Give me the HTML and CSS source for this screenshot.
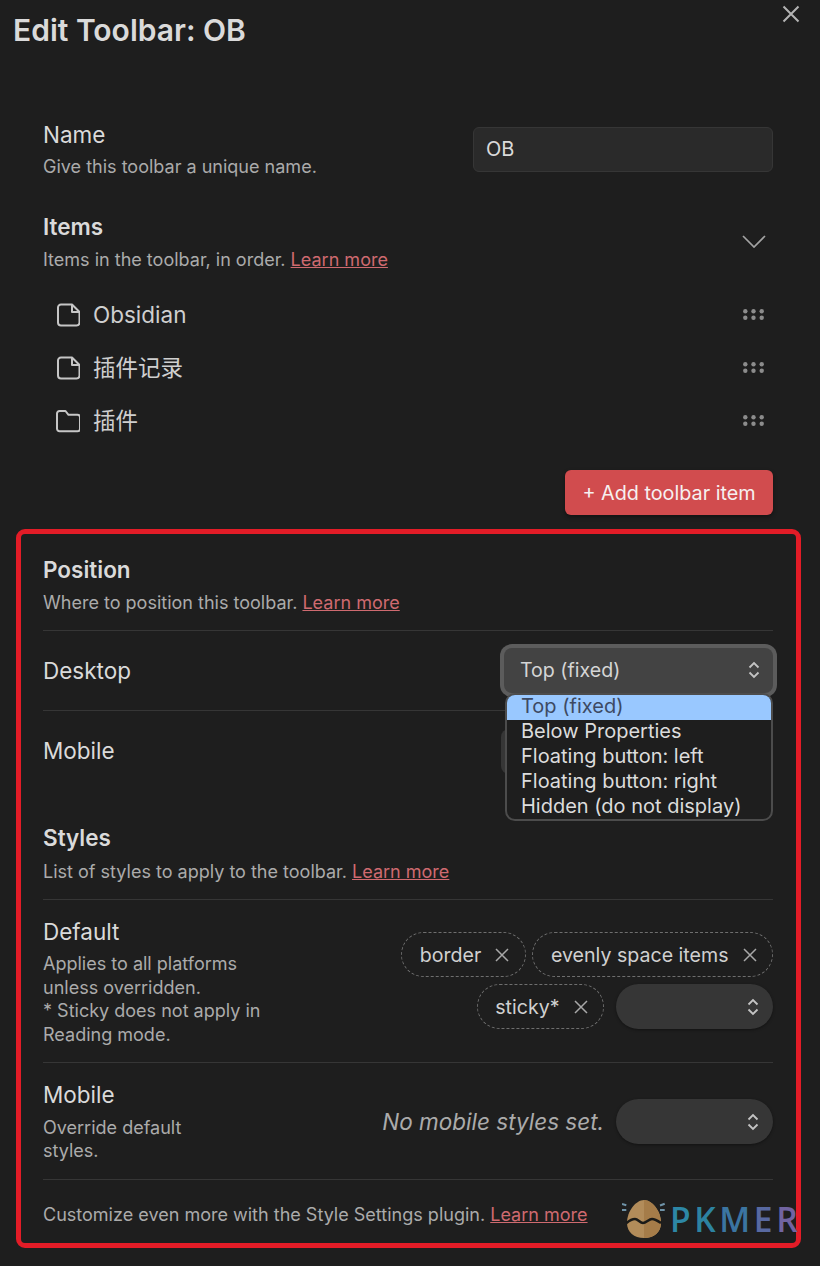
FILE: index.html
```html
<!DOCTYPE html>
<html lang="en">
<head>
<meta charset="utf-8">
<title>Edit Toolbar: OB</title>
<link rel="stylesheet" href="styles.css">
</head>
<body>
<main class="modal">
  <button class="close" aria-label="Close">
    <svg viewBox="0 0 18 18" width="18" height="18"><path d="M1.500 1.500l15 15M16.500 1.500l-15 15"/></svg>
  </button>
  <h1 class="title">Edit Toolbar: OB</h1>

  <div class="upper">
    <div class="setting name-setting">
      <div class="info">
        <div class="label">Name</div>
        <div class="desc">Give this toolbar a unique name.</div>
      </div>
      <div class="text-input">OB</div>
    </div>

    <div class="setting items-setting">
      <div class="info">
        <div class="label heading">Items</div>
        <div class="desc">Items in the toolbar, in order. <a class="link">Learn more</a></div>
      </div>
      <svg class="chevron" viewBox="0 0 24 13" width="24" height="13"><path d="M1 1l11 11L23 1"/></svg>
    </div>

    <ul class="items">
      <li class="item">
        <svg class="item-icon" viewBox="0 0 24 24" width="24" height="24"><path d="M16 1.500H5a3 3 0 0 0-3 3v15a3 3 0 0 0 3 3h15.500a3 3 0 0 0 3-3V9z"/><path d="M16 1.500V9h7.500"/></svg>
        <span class="item-name">Obsidian</span>
        <svg class="grip" viewBox="0 0 21 11" width="21" height="11"><circle cx="2.300" cy="2.300" r="2.200"/><circle cx="10.500" cy="2.300" r="2.200"/><circle cx="18.700" cy="2.300" r="2.200"/><circle cx="2.300" cy="8.700" r="2.200"/><circle cx="10.500" cy="8.700" r="2.200"/><circle cx="18.700" cy="8.700" r="2.200"/></svg>
      </li>
      <li class="item">
        <svg class="item-icon" viewBox="0 0 24 24" width="24" height="24"><path d="M16 1.500H5a3 3 0 0 0-3 3v15a3 3 0 0 0 3 3h15.500a3 3 0 0 0 3-3V9z"/><path d="M16 1.500V9h7.500"/></svg>
        <span class="item-name">插件记录</span>
        <svg class="grip" viewBox="0 0 21 11" width="21" height="11"><circle cx="2.300" cy="2.300" r="2.200"/><circle cx="10.500" cy="2.300" r="2.200"/><circle cx="18.700" cy="2.300" r="2.200"/><circle cx="2.300" cy="8.700" r="2.200"/><circle cx="10.500" cy="8.700" r="2.200"/><circle cx="18.700" cy="8.700" r="2.200"/></svg>
      </li>
      <li class="item">
        <svg class="item-icon" viewBox="0 0 24 24" width="24" height="24"><path d="M3.500 22.300h18a2.500 2.500 0 0 0 2.500-2.500V8.300a2.500 2.500 0 0 0-2.500-2.500H12.500L9.500 2H3.500A2.500 2.500 0 0 0 1 4.500v15.300a2.500 2.500 0 0 0 2.500 2.500z"/></svg>
        <span class="item-name">插件</span>
        <svg class="grip" viewBox="0 0 21 11" width="21" height="11"><circle cx="2.300" cy="2.300" r="2.200"/><circle cx="10.500" cy="2.300" r="2.200"/><circle cx="18.700" cy="2.300" r="2.200"/><circle cx="2.300" cy="8.700" r="2.200"/><circle cx="10.500" cy="8.700" r="2.200"/><circle cx="18.700" cy="8.700" r="2.200"/></svg>
      </li>
    </ul>

    <div class="add-row"><button class="add-btn">+ Add toolbar item</button></div>
  </div>

  <section class="highlight">
    <div class="group-head position-head">
      <div class="label heading">Position</div>
      <div class="desc">Where to position this toolbar. <a class="link">Learn more</a></div>
    </div>

    <div class="row desktop-row">
      <div class="label">Desktop</div>
      <div class="select select-focus">
        <span>Top (fixed)</span>
        <svg class="updown" viewBox="0 0 12 18" width="12" height="18"><path d="M1.500 6.500L6 2l4.500 4.500M1.500 11.500L6 16l4.500-4.500"/></svg>
      </div>
      <ul class="dropdown">
        <li class="opt opt-active">Top (fixed)</li>
        <li class="opt">Below Properties</li>
        <li class="opt">Floating button: left</li>
        <li class="opt">Floating button: right</li>
        <li class="opt">Hidden (do not display)</li>
      </ul>
    </div>

    <div class="row mobile-row">
      <div class="label">Mobile</div>
      <div class="select select-plain"></div>
    </div>

    <div class="group-head styles-head">
      <div class="label heading">Styles</div>
      <div class="desc">List of styles to apply to the toolbar. <a class="link">Learn more</a></div>
    </div>

    <div class="row default-row">
      <div class="info narrow">
        <div class="label">Default</div>
        <div class="desc">Applies to all platforms unless overridden.<br>* Sticky does not apply in Reading mode.</div>
      </div>
      <div class="chips">
        <span class="chip">border<svg class="x" viewBox="0 0 14 14" width="14" height="14"><path d="M1 1l12 12M13 1L1 13"/></svg></span>
        <span class="chip">evenly space items<svg class="x" viewBox="0 0 14 14" width="14" height="14"><path d="M1 1l12 12M13 1L1 13"/></svg></span>
        <span class="chip">sticky*<svg class="x" viewBox="0 0 14 14" width="14" height="14"><path d="M1 1l12 12M13 1L1 13"/></svg></span>
        <div class="pill-select"><svg class="updown" viewBox="0 0 12 18" width="12" height="18"><path d="M1.500 6.500L6 2l4.500 4.500M1.500 11.500L6 16l4.500-4.500"/></svg></div>
      </div>
    </div>

    <div class="row mobile-styles-row">
      <div class="info narrow narrow-small">
        <div class="label">Mobile</div>
        <div class="desc">Override default styles.</div>
      </div>
      <div class="chips chips-single">
        <em class="none">No mobile styles set.</em>
        <div class="pill-select"><svg class="updown" viewBox="0 0 12 18" width="12" height="18"><path d="M1.500 6.500L6 2l4.500 4.500M1.500 11.500L6 16l4.500-4.500"/></svg></div>
      </div>
    </div>

    <div class="row footer-row">
      <div class="desc">Customize even more with the Style Settings plugin. <a class="link">Learn more</a></div>
    </div>
  </section>

  <div class="watermark">
    <svg class="egg" viewBox="0 0 44 42" width="44" height="42">
      <path d="M22 2c8 0 17 11 17 23 0 9-7 15-17 15S5 34 5 25C5 13 14 2 22 2z" fill="#b28c5a"/>
      <path d="M22 2c8 0 17 11 17 23 0 9-7 15-17 15z" fill="#a57c49"/>
      <path d="M4.500 25C8 22 11 21 13 21c3 0 5 4 8 4s6-4 9-4 6 2 9 4" fill="none" stroke="#1a1a18" stroke-width="2.600"/>
      <path d="M0 6l4.300 1.300M0 12h4.300M38 7.500l4.700-1.800M38 12h4.700" fill="none" stroke="#6f93a8" stroke-width="2"/>
    </svg>
    <span class="wm-text"><span class="c1">P</span><span class="c2">K</span><span class="c3">M</span><span class="c4">E</span><span class="c5">R</span></span>
  </div>
</main>
</body>
</html>
```

FILE: styles.css
```css
* { box-sizing: border-box; }
html, body { margin: 0; padding: 0; }
body {
  width: 820px;
  height: 1266px;
  overflow: hidden;
  background: #1e1e1e;
  color: #dadada;
  font-family: Inter, "Noto Sans CJK SC", sans-serif;
}
.modal { position: relative; height: 1266px; padding: 12px 0 0 16px; }
.close {
  position: absolute; top: 5px; right: 20px;
  width: 18px; height: 18px; padding: 0; border: 0; background: none;
}
.close svg { display: block; fill: none; stroke: #b3b3b3; stroke-width: 2; }
.title {
  margin: 0 0 0 -3px;
  font-size: 30px; line-height: 36px; font-weight: 600; color: #dadada;
}
.upper { padding: 66px 47px 0 27px; }
.setting { display: flex; justify-content: space-between; align-items: center; }
.label { font-size: 22.500px; line-height: 30px; color: #dadada; }
.heading { font-weight: 600; }
.desc { font-size: 18.030px; line-height: 23.500px; color: #ababab; }
.link { color: #cf6a70; text-decoration: underline; }
.name-setting { height: 70px; }
.name-setting .desc { margin-top: 5px; }
.text-input {
  width: 300px; height: 45px; padding: 0 12px;
  display: flex; align-items: center;
  background: #2a2a2a; border: 1px solid #363636; border-radius: 6px;
  font-size: 20px; color: #dadada;
}
.items-setting { height: 59px; margin-top: 28px; }
.items-setting .desc { margin-top: 6px; }
.chevron { fill: none; stroke: #a3a3a3; stroke-width: 1.700; margin-right: 7px; }
.items { list-style: none; margin: 17px 0 0; padding: 0; }
.item {
  display: flex; align-items: center; height: 53px;
  padding: 0 9px 0 13px;
}
.item-icon { fill: none; stroke: #c6c6c6; stroke-width: 2; stroke-linejoin: round; flex: none; }
.item-name { flex: 1; margin-left: 13px; font-size: 22.500px; line-height: 30px; color: #cfcfcf; }
.grip { fill: #8c8c8c; }
.add-row { display: flex; justify-content: flex-end; margin-top: 23px; }
.add-btn {
  width: 208px; height: 45px; padding: 0;
  background: #d14c4e; border: 0; border-radius: 6px;
  box-shadow: 0 2px 4px rgba(0,0,0,.4);
  font: 400 19.800px Inter, sans-serif; color: #f6f0f0;
}
.highlight {
  margin-top: 14px;
  width: 785px; height: 719px;
  padding: 21px 23px 0 22px;
  border: 5px solid #e31c27;
  border-radius: 9px;
}
.group-head { border-bottom: 1px solid #363636; }
.position-head { height: 76px; }
.position-head .desc { margin-top: 6px; }
.styles-head { height: 77px; margin-top: 32px; }
.styles-head .desc { margin-top: 7px; }
.row {
  position: relative;
  display: flex; justify-content: space-between; align-items: center;
}
.desktop-row { height: 80px; border-bottom: 1px solid #363636; }
.mobile-row { height: 80px; }
.select {
  width: 272px; height: 45px; padding: 0 13px 0 16px;
  display: flex; align-items: center; justify-content: space-between;
  background: #3f3f3f; border-radius: 8px;
  font-size: 19.600px; color: #d5d5d5;
}
.select-focus {
  width: 269px; margin-top: -1px;
  background: #434343;
  box-shadow: 0 0 0 4px #5c5c5c;
}
.select-plain { background: #363636; }
.updown { fill: none; stroke: #c4c4c4; stroke-width: 1.800; flex: none; }
.dropdown {
  position: absolute; z-index: 2; top: 62px; right: 0;
  width: 268px; height: 128px; margin: 0; padding: 0;
  list-style: none; overflow: hidden;
  background: #1e1e1e; border: 2px solid #4c4c4c; border-radius: 10px;
}
.opt { height: 25px; padding-left: 14px; font-size: 20px; line-height: 23px; color: #dcdcdc; }
.opt-active { background: #99c8ff; color: #3d4a63; }
.default-row { height: 163px; border-bottom: 1px solid #363636; align-items: flex-start; padding-top: 17px; }
.mobile-styles-row { height: 117px; border-bottom: 1px solid #363636; align-items: flex-start; padding-top: 17px; }
.narrow { width: 225px; flex: none; }
.narrow-small { width: 170px; }
.narrow .desc { margin-top: 5px; }
.narrow-small .desc { margin-top: 5.500px; }
.chips {
  flex: 1; display: flex; flex-wrap: wrap; justify-content: flex-end;
  align-items: center; gap: 7px 6.500px; margin-top: 15px;
}
.chips-single { margin-top: 19px; }
.chip {
  display: inline-flex; align-items: center; height: 45px; padding: 0 15.500px 0 17.500px;
  border: 1px dashed #6e6e6e; border-radius: 23px;
  font-size: 19.600px; color: #d0d0d0;
}
.x { margin-left: 14px; fill: none; stroke: #a8a8a8; stroke-width: 1.500; }
.pill-select {
  width: 157px; height: 45px; margin-left: 5.500px; padding-right: 14px;
  display: flex; align-items: center; justify-content: flex-end;
  background: #363636; border-radius: 23px;
  box-shadow: 0 1px 3px rgba(0,0,0,.4);
}
.none { font-size: 22.500px; color: #ababab; }
.footer-row { height: 70px; }
.watermark {
  position: absolute; left: 622px; top: 1198px; z-index: 3;
  display: flex; align-items: center; gap: 4px;
}
.egg { flex: none; }
.wm-text { font-family: "Open Sans", sans-serif; font-size: 33.600px; font-weight: 600; letter-spacing: 3.600px; line-height: 42px; opacity: .9; }
.c1 { color: #2f93b5; }
.c2 { color: #2f8fb0; }
.c3 { color: #3f7fb0; }
.c4 { color: #5f72b0; }
.c5 { color: #7a6cb0; }
```
